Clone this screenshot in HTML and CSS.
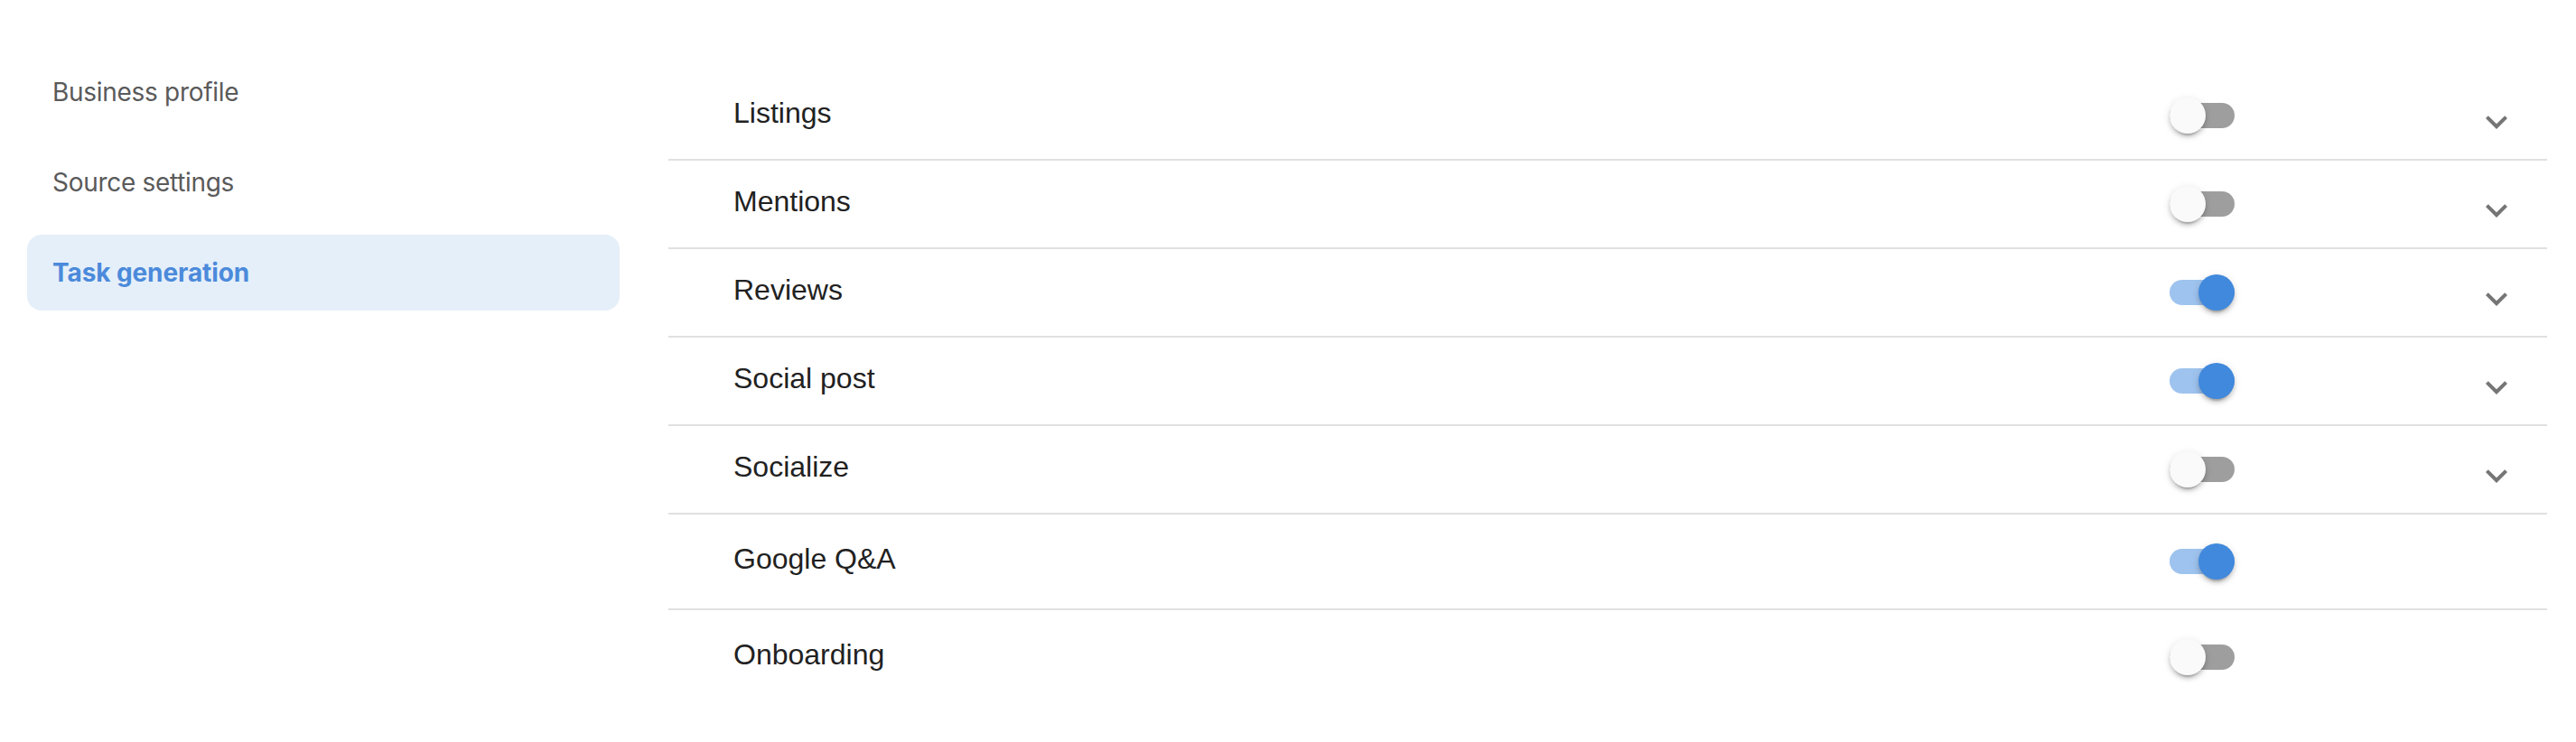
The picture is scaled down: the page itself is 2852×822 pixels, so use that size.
FILE: index.html
```html
<!DOCTYPE html>
<html lang="en">
<head>
<meta charset="utf-8">
<title>Task generation</title>
<link rel="stylesheet" href="styles.css">
</head>
<body>
<div class="layout">
  <nav class="sidebar">
    <a class="nav-item">Business profile</a>
    <a class="nav-item">Source settings</a>
    <a class="nav-item active">Task generation</a>
  </nav>
  <main class="content">
    <div class="row">
      <span class="label">Listings</span>
      <span class="switch"><span class="thumb"></span></span>
      <span class="chev"><svg viewBox="0 0 24 24" width="48" height="48"><path d="M16.59 8.59L12 13.17 7.41 8.59 6 10l6 6 6-6z"/></svg></span>
    </div>
    <div class="row">
      <span class="label">Mentions</span>
      <span class="switch"><span class="thumb"></span></span>
      <span class="chev"><svg viewBox="0 0 24 24" width="48" height="48"><path d="M16.59 8.59L12 13.17 7.41 8.59 6 10l6 6 6-6z"/></svg></span>
    </div>
    <div class="row">
      <span class="label">Reviews</span>
      <span class="switch on"><span class="thumb"></span></span>
      <span class="chev"><svg viewBox="0 0 24 24" width="48" height="48"><path d="M16.59 8.59L12 13.17 7.41 8.59 6 10l6 6 6-6z"/></svg></span>
    </div>
    <div class="row">
      <span class="label">Social post</span>
      <span class="switch on"><span class="thumb"></span></span>
      <span class="chev"><svg viewBox="0 0 24 24" width="48" height="48"><path d="M16.59 8.59L12 13.17 7.41 8.59 6 10l6 6 6-6z"/></svg></span>
    </div>
    <div class="row">
      <span class="label">Socialize</span>
      <span class="switch"><span class="thumb"></span></span>
      <span class="chev"><svg viewBox="0 0 24 24" width="48" height="48"><path d="M16.59 8.59L12 13.17 7.41 8.59 6 10l6 6 6-6z"/></svg></span>
    </div>
    <div class="row tall">
      <span class="label">Google Q&amp;A</span>
      <span class="switch on"><span class="thumb"></span></span>
      <span class="chev empty"></span>
    </div>
    <div class="row tall">
      <span class="label">Onboarding</span>
      <span class="switch"><span class="thumb"></span></span>
      <span class="chev empty"></span>
    </div>
  </main>
</div>
</body>
</html>
```

FILE: styles.css
```css
html, body {
  margin: 0;
  padding: 0;
  background: #ffffff;
}

.layout {
  display: flex;
  align-items: flex-start;
  padding: 60px 32px 0 30px;
}

.sidebar {
  width: 656px;
  flex-shrink: 0;
  display: flex;
  flex-direction: column;
  gap: 16px;
}

.nav-item {
  height: 84px;
  display: flex;
  align-items: center;
  padding-left: 28px;
  border-radius: 16px;
  font-family: Inter, "Noto Sans", sans-serif;
  font-size: 28px;
  letter-spacing: -0.3px;
  color: #5a5a5a;
  cursor: pointer;
}

.nav-item.active {
  background: #e5eff9;
  color: #4b8adb;
  font-weight: 700;
  letter-spacing: -0.1px;
}

.content {
  flex: 1;
  margin-left: 54px;
  padding-top: 20px;
  display: flex;
  flex-direction: column;
}

.row {
  height: 96px;
  display: flex;
  align-items: center;
  padding: 0 32px 0 72px;
  border-bottom: 2px solid #e0e0e0;
}

.row.tall {
  height: 104px;
}

.row:last-child {
  border-bottom: none;
}

.label {
  flex: 1;
  font-family: "Liberation Sans", Arial, sans-serif;
  font-size: 32px;
  color: #212121;
  padding-bottom: 5px;
}

.switch {
  width: 72px;
  height: 28px;
  border-radius: 14px;
  background: #9e9e9e;
  display: flex;
  align-items: center;
  justify-content: flex-start;
  flex-shrink: 0;
}

.switch .thumb {
  width: 40px;
  height: 40px;
  border-radius: 50%;
  flex-shrink: 0;
  background: #fafafa;
  box-shadow: 0 6px 2px -4px rgba(0,0,0,.2), 0 4px 4px 0 rgba(0,0,0,.14), 0 2px 10px 0 rgba(0,0,0,.12);
}

.switch.on {
  background: #9ec3ee;
  justify-content: flex-end;
}

.switch.on .thumb {
  background: #4089dd;
}

.chev {
  width: 48px;
  height: 48px;
  margin-left: 266px;
  margin-top: 14px;
  flex-shrink: 0;
  display: flex;
}

.chev svg {
  fill: #757575;
}
```
